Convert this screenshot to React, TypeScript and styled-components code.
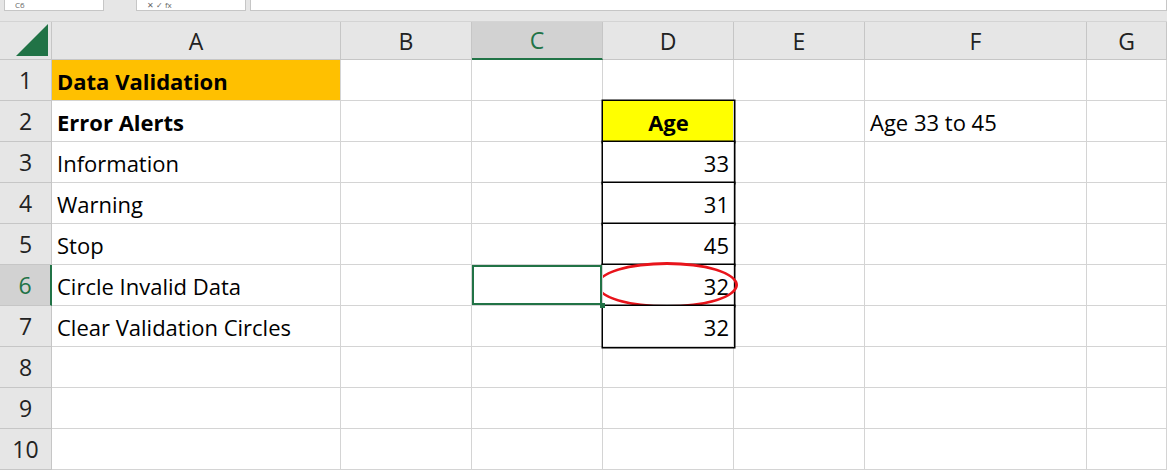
import React from "react";
import styled, { createGlobalStyle, css } from "styled-components";

const GlobalStyle = createGlobalStyle`
  html, body { margin: 0; padding: 0; background: #fff; overflow: hidden; }
  body { font-family: "Open Sans", "Liberation Sans", sans-serif; }
`;

const TopBar = styled.div`
  height: 22px;
  background: #e6e6e6;
  display: flex;
  align-items: flex-start;
  border-bottom: 1px solid #d4d4d4;
  box-sizing: border-box;
`;

const Field = styled.div<{ $w: string; $ml: number }>`
  width: ${(p) => p.$w};
  margin-left: ${(p) => p.$ml}px;
  height: 11px;
  background: #fff;
  border: 1px solid #c6c6c6;
  border-top: none;
  box-sizing: border-box;
  font-size: 8px;
  line-height: 9px;
  color: #666;
  padding-left: 10px;
  overflow: hidden;
`;

const Grid = styled.div`
  display: grid;
  grid-template-columns: 52px 289px 131px 131px 131px 131px 222px 80px;
  grid-template-rows: 38px repeat(10, 41px);
`;

const ColHead = styled.div<{ $sel?: boolean }>`
  background: ${(p) => (p.$sel ? "#d2d2d2" : "#e6e6e6")};
  border-right: 1px solid #c6c6c6;
  border-bottom: ${(p) => (p.$sel ? "2px solid #217346" : "1px solid #c6c6c6")};
  box-sizing: border-box;
  display: flex;
  align-items: center;
  justify-content: center;
  font-size: 23px;
  color: ${(p) => (p.$sel ? "#217346" : "#222")};
`;

const Corner = styled.div`
  background: #e6e6e6;
  border-right: 1px solid #c6c6c6;
  border-bottom: 1px solid #c6c6c6;
  box-sizing: border-box;
  position: relative;
  svg { position: absolute; right: 3px; bottom: 3px; }
`;

const RowHead = styled.div<{ $sel?: boolean }>`
  background: ${(p) => (p.$sel ? "#d2d2d2" : "#e6e6e6")};
  border-right: ${(p) => (p.$sel ? "2px solid #217346" : "1px solid #c6c6c6")};
  border-bottom: 1px solid #c6c6c6;
  box-sizing: border-box;
  display: flex;
  align-items: center;
  justify-content: center;
  font-size: 23px;
  color: ${(p) => (p.$sel ? "#217346" : "#222")};
`;

const Cell = styled.div<{
  $bg?: string;
  $bold?: boolean;
  $align?: string;
  $boxed?: boolean;
  $selected?: boolean;
}>`
  position: relative;
  background: ${(p) => p.$bg || "#fff"};
  border-right: 1px solid #d4d4d4;
  border-bottom: 1px solid #d4d4d4;
  box-sizing: border-box;
  display: flex;
  align-items: center;
  justify-content: ${(p) => p.$align || "flex-start"};
  padding: 2px 4px 0 5px;
  font-size: 22px;
  font-weight: ${(p) => (p.$bold ? 700 : 400)};
  color: #000;
  white-space: nowrap;
  ${(p) =>
    p.$boxed &&
    css`
      box-shadow: 0 0 0 1.5px #000;
      z-index: 1;
    `}
  ${(p) =>
    p.$selected &&
    css`
      box-shadow: inset 0 0 0 2px #217346;
      z-index: 2;
      &::after {
        content: "";
        position: absolute;
        right: -3px;
        bottom: -3px;
        width: 5px;
        height: 5px;
        background: #217346;
      }
    `}
`;

const Circle = styled.div`
  position: absolute;
  left: -7px;
  right: -5px;
  top: -3px;
  bottom: -3px;
  border: 3.5px solid #e8141b;
  border-radius: 50%;
  z-index: 3;
`;

const cols = ["A", "B", "C", "D", "E", "F", "G"];

type CellData = { text?: string; bg?: string; bold?: boolean; align?: string; boxed?: boolean; circle?: boolean; selected?: boolean };

const data: Record<string, CellData> = {
  A1: { text: "Data Validation", bg: "#ffc000", bold: true },
  A2: { text: "Error Alerts", bold: true },
  A3: { text: "Information" },
  A4: { text: "Warning" },
  A5: { text: "Stop" },
  A6: { text: "Circle Invalid Data" },
  A7: { text: "Clear Validation Circles" },
  D2: { text: "Age", bg: "#ffff00", bold: true, align: "center", boxed: true },
  D3: { text: "33", align: "flex-end", boxed: true },
  D4: { text: "31", align: "flex-end", boxed: true },
  D5: { text: "45", align: "flex-end", boxed: true },
  D6: { text: "32", align: "flex-end", boxed: true, circle: true },
  D7: { text: "32", align: "flex-end", boxed: true },
  F2: { text: "Age 33 to 45" },
  C6: { selected: true },
};

export default function App() {
  return (
    <>
      <GlobalStyle />
      <TopBar>
        <Field $w="100px" $ml={4}>C6</Field>
        <Field $w="110px" $ml={32}>✕ ✓ fx</Field>
        <Field $w="920px" $ml={4} />
      </TopBar>
      <Grid>
        <Corner>
          <svg width="32" height="32" viewBox="0 0 32 32">
            <polygon points="32,0 32,32 0,32" fill="#217346" />
          </svg>
        </Corner>
        {cols.map((c) => (
          <ColHead key={c} $sel={c === "C"}>{c}</ColHead>
        ))}
        {Array.from({ length: 10 }, (_, i) => i + 1).map((r) => (
          <React.Fragment key={r}>
            <RowHead $sel={r === 6}>{r}</RowHead>
            {cols.map((c) => {
              const d = data[c + r] || {};
              return (
                <Cell
                  key={c}
                  $bg={d.bg}
                  $bold={d.bold}
                  $align={d.align}
                  $boxed={d.boxed}
                  $selected={d.selected}
                >
                  {d.text}
                  {d.circle && <Circle />}
                </Cell>
              );
            })}
          </React.Fragment>
        ))}
      </Grid>
    </>
  );
}
